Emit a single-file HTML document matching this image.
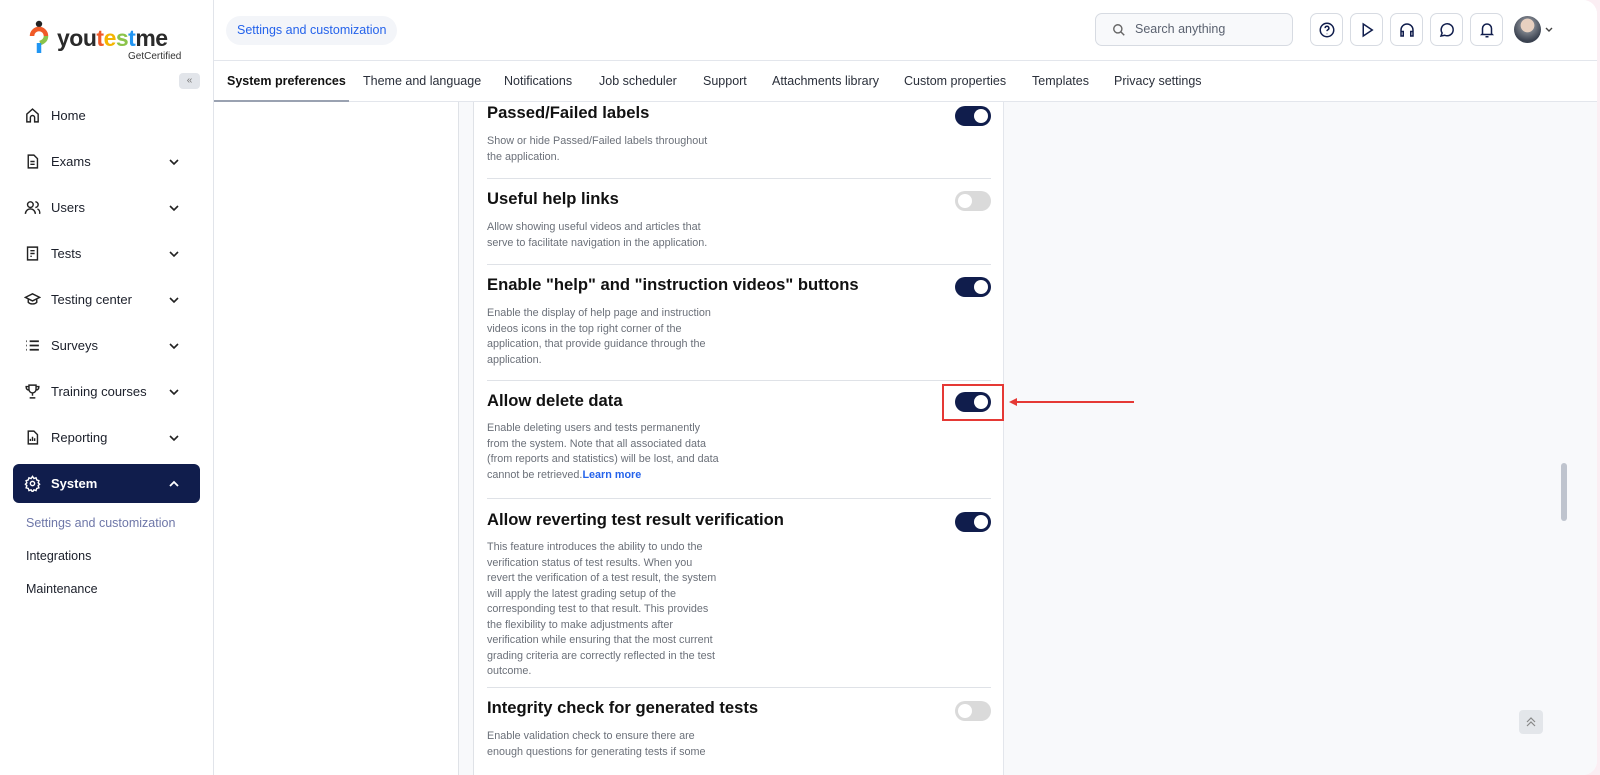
<!DOCTYPE html>
<html><head><meta charset="utf-8"><style>
*{box-sizing:border-box;margin:0;padding:0}
body{width:1600px;height:775px;overflow:hidden;background:#fbeef3;font-family:"Liberation Sans",sans-serif;color:#1b1f2a;position:relative}
.win{position:absolute;left:0;top:0;width:1597px;height:775px;background:#fff;border-radius:0 14px 14px 0;overflow:hidden}
.side{position:absolute;left:0;top:0;width:214px;height:775px;background:#fff;border-right:1px solid #e1e4ea}
.nav{position:absolute;left:24px;font-size:13px;color:#1b1f2a;display:flex;align-items:center;width:166px}
.nav svg{width:17px;height:17px;margin-right:10px;flex:none}
.nav .ch{position:absolute;right:0;width:12px;height:12px}
.sys{position:absolute;left:13px;top:464px;width:187px;height:39px;background:#101d4c;border-radius:6px}
.sub{position:absolute;left:26px;font-size:12.5px;color:#1b1f2a}
.main{position:absolute;left:214px;top:0;right:0;height:775px;background:#f8f9fb}
.hdr{position:absolute;left:0;top:0;right:0;height:61px;background:#fff;border-bottom:1px solid #e3e6ec}
.tabs{position:absolute;left:0;top:61px;right:0;height:41px;background:#fff;border-bottom:1px solid #e3e6ec;font-size:12.5px}
.tab{position:absolute;top:13px;color:#2a2f3a}
.ib{position:absolute;top:13px;width:33px;height:33px;border:1px solid #d7dbe2;border-radius:7px;background:#fff;display:flex;align-items:center;justify-content:center}
.ib svg{width:18px;height:18px}
.t{position:absolute;left:487px;font-size:16.6px;font-weight:bold;color:#111}
.d{position:absolute;left:487px;font-size:10.8px;color:#6b7079;line-height:15.5px;white-space:nowrap}
.hr{position:absolute;left:487px;width:504px;height:1px;background:#dfe2e7}
.tg{position:absolute;left:955px;width:36px;height:20px;border-radius:10px;background:#101d4c}
.tg::after{content:"";position:absolute;right:3px;top:3px;width:14px;height:14px;border-radius:50%;background:#fff}
.tg.off{background:#dadada}
.tg.off::after{right:auto;left:3px}
</style></head><body>
<div class="win">
<div class="side">
 <svg style="position:absolute;left:29px;top:20px" width="20" height="40" viewBox="0 0 20 40"><circle cx="10" cy="4" r="3.2" fill="#222"/><path d="M3 16a7 7 0 0 1 14 0" stroke="#f05a28" stroke-width="4.5" fill="none"/><path d="M17 16c0 4-3 6-6 7" stroke="#8bc34a" stroke-width="4.5" fill="none"/><path d="M10 23v10" stroke="#2196f3" stroke-width="4.5"/></svg>
 <div style="position:absolute;left:57px;top:25px;font-size:23px;font-weight:bold;letter-spacing:-0.5px;color:#2a2a2a">you<span style="color:#f05a28">t</span><span style="color:#f4b400">e</span><span style="color:#8bc34a">s</span><span style="color:#2196f3">t</span>me</div>
 <div style="position:absolute;left:128px;top:51px;font-size:10px;color:#333">GetCertified</div>
 <div style="position:absolute;left:179px;top:73px;width:21px;height:16px;background:#e2e5ea;border-radius:4px;font-size:10px;color:#777;text-align:center;line-height:15px">«</div>
 <div class="nav" style="top:107px"><svg viewBox="0 0 24 24" fill="none" stroke="#222" stroke-width="2"><path d="M4 21V10l8-7 8 7v11h-5v-6a3 3 0 0 0-6 0v6z"/></svg>Home</div>
 <div class="nav" style="top:153px"><svg viewBox="0 0 24 24" fill="none" stroke="#222" stroke-width="2"><path d="M6 3h8l5 5v13H6z M9 12h6M9 16h6"/></svg>Exams<svg class="ch" viewBox="0 0 12 12"><path d="M2 4l4 4 4-4" stroke="#222" stroke-width="1.6" fill="none"/></svg></div>
 <div class="nav" style="top:199px"><svg viewBox="0 0 24 24" fill="none" stroke="#222" stroke-width="2"><circle cx="9" cy="8" r="4"/><path d="M2 21a7 7 0 0 1 14 0M16 4a4 4 0 0 1 0 8M19 14a6 6 0 0 1 3 7"/></svg>Users<svg class="ch" viewBox="0 0 12 12"><path d="M2 4l4 4 4-4" stroke="#222" stroke-width="1.6" fill="none"/></svg></div>
 <div class="nav" style="top:245px"><svg viewBox="0 0 24 24" fill="none" stroke="#222" stroke-width="2"><path d="M5 3h14v18H5z M9 8h6M9 12h6M9 16h2"/></svg>Tests<svg class="ch" viewBox="0 0 12 12"><path d="M2 4l4 4 4-4" stroke="#222" stroke-width="1.6" fill="none"/></svg></div>
 <div class="nav" style="top:291px"><svg viewBox="0 0 24 24" fill="none" stroke="#222" stroke-width="2"><path d="M2 9l10-5 10 5-10 5z M6 11v5c3 3 9 3 12 0v-5"/></svg>Testing center<svg class="ch" viewBox="0 0 12 12"><path d="M2 4l4 4 4-4" stroke="#222" stroke-width="1.6" fill="none"/></svg></div>
 <div class="nav" style="top:337px"><svg viewBox="0 0 24 24" fill="none" stroke="#222" stroke-width="2.4"><path d="M3 6h1M3 12h1M3 18h1M8 6h13M8 12h13M8 18h13"/></svg>Surveys<svg class="ch" viewBox="0 0 12 12"><path d="M2 4l4 4 4-4" stroke="#222" stroke-width="1.6" fill="none"/></svg></div>
 <div class="nav" style="top:383px"><svg viewBox="0 0 24 24" fill="none" stroke="#222" stroke-width="2"><path d="M7 3h10v6a5 5 0 0 1-10 0z M7 5H3c0 4 2 5 4 5M17 5h4c0 4-2 5-4 5M12 14v4M8 21h8"/></svg>Training courses<svg class="ch" viewBox="0 0 12 12"><path d="M2 4l4 4 4-4" stroke="#222" stroke-width="1.6" fill="none"/></svg></div>
 <div class="nav" style="top:429px"><svg viewBox="0 0 24 24" fill="none" stroke="#222" stroke-width="2"><path d="M6 3h8l5 5v13H6z M9 17v-3M12 17v-6M15 17v-4"/></svg>Reporting<svg class="ch" viewBox="0 0 12 12"><path d="M2 4l4 4 4-4" stroke="#222" stroke-width="1.6" fill="none"/></svg></div>
 <div class="sys"></div>
 <div class="nav" style="top:475px;color:#fff;font-weight:bold"><svg viewBox="0 0 24 24" fill="none" stroke="#fff" stroke-width="2"><circle cx="12" cy="12" r="3"/><path d="M12 2l2 3 3-1 1 3 3 1-1 3 2 2-2 2 1 3-3 1-1 3-3-1-2 3-2-3-3 1-1-3-3-1 1-3-2-2 2-2-1-3 3-1 1-3 3 1z"/></svg>System<svg class="ch" viewBox="0 0 12 12"><path d="M2 8l4-4 4 4" stroke="#fff" stroke-width="1.8" fill="none"/></svg></div>
 <div class="sub" style="top:516px;color:#6e77a8">Settings and customization</div>
 <div class="sub" style="top:549px">Integrations</div>
 <div class="sub" style="top:582px">Maintenance</div>
</div>
<div class="main">
 <div class="hdr">
  <div style="position:absolute;left:12px;top:16px;height:29px;padding:0 11px;background:#f3f5f9;border-radius:15px;font-size:12.5px;color:#2563eb;line-height:29px">Settings and customization</div>
  <div style="position:absolute;left:881px;top:13px;width:198px;height:33px;border:1px solid #d7dbe2;border-radius:7px;background:#f8f9fb;font-size:12.5px;color:#5b6270;line-height:31px;padding-left:39px">Search anything
   <svg style="position:absolute;left:16px;top:9px" width="14" height="14" viewBox="0 0 24 24" fill="none" stroke="#666" stroke-width="2.4"><circle cx="10" cy="10" r="7"/><path d="M15 15l6 6"/></svg></div>
  <div class="ib" style="left:1096px"><svg viewBox="0 0 24 24" fill="none" stroke="#101d4c" stroke-width="2"><circle cx="12" cy="12" r="9"/><path d="M9.5 9.5a2.5 2.5 0 1 1 3.5 2.3c-.7.4-1 1-1 1.7M12 17v.5"/></svg></div>
  <div class="ib" style="left:1136px"><svg viewBox="0 0 24 24" fill="none" stroke="#101d4c" stroke-width="2"><path d="M7 4l12 8-12 8z"/></svg></div>
  <div class="ib" style="left:1176px"><svg viewBox="0 0 24 24" fill="none" stroke="#101d4c" stroke-width="2"><path d="M4 17v-5a8 8 0 0 1 16 0v5M4 14h3v6H4zM17 14h3v6h-3z"/></svg></div>
  <div class="ib" style="left:1216px"><svg viewBox="0 0 24 24" fill="none" stroke="#101d4c" stroke-width="2"><path d="M4 20l1.5-4A8 8 0 1 1 9 19z"/></svg></div>
  <div class="ib" style="left:1256px"><svg viewBox="0 0 24 24" fill="none" stroke="#101d4c" stroke-width="2"><path d="M6 17V10a6 6 0 0 1 12 0v7l1 1H5zM10 21h4"/></svg></div>
  <div style="position:absolute;left:1300px;top:16px;width:27px;height:27px;border-radius:50%;background:radial-gradient(circle at 50% 35%,#e8d0c0 0 30%,#7a7f88 32%,#3b4250 70%)"></div>
  <svg style="position:absolute;left:1331px;top:27px" width="8" height="6" viewBox="0 0 8 6"><path d="M1 1l3 3 3-3" stroke="#444" stroke-width="1.4" fill="none"/></svg>
 </div>
 <div class="tabs">
  <div class="tab" style="left:13px;font-weight:bold;color:#111">System preferences</div>
  <div style="position:absolute;left:0;top:39px;width:135px;height:2px;background:#9aa2b1"></div>
  <div class="tab" style="left:149px">Theme and language</div>
  <div class="tab" style="left:290px">Notifications</div>
  <div class="tab" style="left:385px">Job scheduler</div>
  <div class="tab" style="left:489px">Support</div>
  <div class="tab" style="left:558px">Attachments library</div>
  <div class="tab" style="left:690px">Custom properties</div>
  <div class="tab" style="left:818px">Templates</div>
  <div class="tab" style="left:900px">Privacy settings</div>
 </div>
 <div style="position:absolute;left:0;top:102px;width:245px;height:673px;background:#fff;border-right:1px solid #dfe2e7"></div>
 <div style="position:absolute;left:259px;top:102px;width:531px;height:673px;background:#fff;border-left:1px solid #dfe2e7;border-right:1px solid #e3e6ec"></div>
 <div style="position:absolute;left:1347px;top:463px;width:6px;height:58px;border-radius:3px;background:#bfc4ce"></div>
 <div style="position:absolute;left:1305px;top:710px;width:24px;height:24px;border-radius:4px;background:#e3e6ea;text-align:center"><svg width="14" height="14" viewBox="0 0 14 14" style="margin-top:5px"><path d="M3 7l4-4 4 4M3 11l4-4 4 4" stroke="#888" stroke-width="1.2" fill="none"/></svg></div>
</div>

<div class="t" style="top:103px">Passed/Failed labels</div>
<div class="tg" style="top:106px"></div>
<div class="d" style="top:134px">Show or hide Passed/Failed labels throughout<br>the application.</div>
<div class="hr" style="top:178px"></div>
<div class="t" style="top:189px">Useful help links</div>
<div class="tg off" style="top:191px"></div>
<div class="d" style="top:220px">Allow showing useful videos and articles that<br>serve to facilitate navigation in the application.</div>
<div class="hr" style="top:264px"></div>
<div class="t" style="top:275px">Enable "help" and "instruction videos" buttons</div>
<div class="tg" style="top:277px"></div>
<div class="d" style="top:306px">Enable the display of help page and instruction<br>videos icons in the top right corner of the<br>application, that provide guidance through the<br>application.</div>
<div class="hr" style="top:380px"></div>
<div class="t" style="top:391px">Allow delete data</div>
<div class="tg" style="top:392px"></div>
<div style="position:absolute;left:942px;top:384px;width:62px;height:37px;border:2px solid #e53935"></div>
<svg style="position:absolute;left:1008px;top:396px" width="128" height="12" viewBox="0 0 128 12"><path d="M6 6H126" stroke="#e53935" stroke-width="2"/><path d="M1 6l8-4v8z" fill="#e53935"/></svg>
<div class="d" style="top:421px">Enable deleting users and tests permanently<br>from the system. Note that all associated data<br>(from reports and statistics) will be lost, and data<br>cannot be retrieved.<span style="color:#2563eb;font-weight:bold">Learn more</span></div>
<div class="hr" style="top:498px"></div>
<div class="t" style="top:510px">Allow reverting test result verification</div>
<div class="tg" style="top:512px"></div>
<div class="d" style="top:540px">This feature introduces the ability to undo the<br>verification status of test results. When you<br>revert the verification of a test result, the system<br>will apply the latest grading setup of the<br>corresponding test to that result. This provides<br>the flexibility to make adjustments after<br>verification while ensuring that the most current<br>grading criteria are correctly reflected in the test<br>outcome.</div>
<div class="hr" style="top:687px"></div>
<div class="t" style="top:698px">Integrity check for generated tests</div>
<div class="tg off" style="top:701px"></div>
<div class="d" style="top:729px">Enable validation check to ensure there are<br>enough questions for generating tests if some</div>
</div>
</body></html>
